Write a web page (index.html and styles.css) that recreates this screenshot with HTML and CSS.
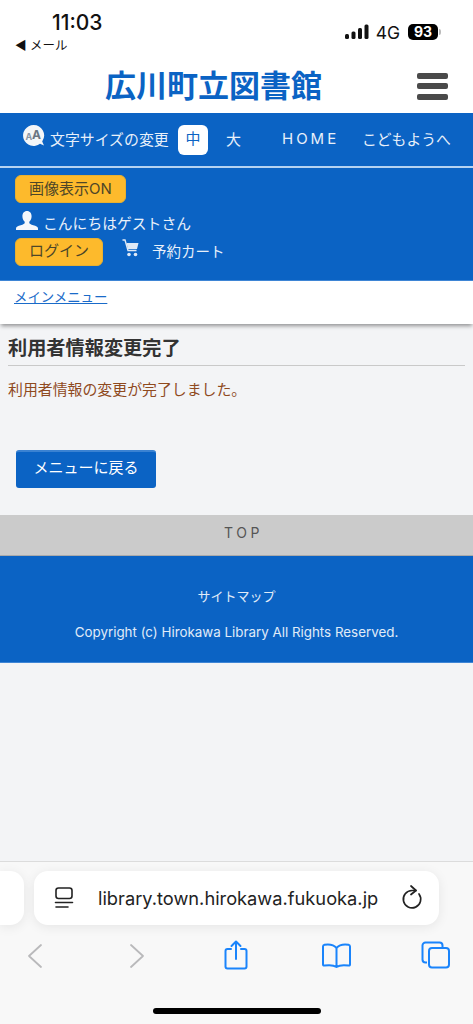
FILE: index.html
```html
<!DOCTYPE html>
<html lang="ja">
<head>
    <meta charset="UTF-8">
    <meta name="viewport" content="width=device-width, initial-scale=1.0">
    <title>広川町立図書館</title>
    <link rel="stylesheet" href="styles.css">
</head>
<body>
    <div class="status">
        <div class="status-left">
            <div class="time">11:03</div>
            <div class="back">◀ メール</div>
        </div>
        <div class="status-right">
            <svg class="signal" width="24" height="16" viewBox="0 0 24 16">
                <rect x="0" y="10" width="4" height="5" rx="1.5"/>
                <rect x="6.5" y="7.5" width="4" height="7.5" rx="1.5"/>
                <rect x="13" y="4" width="4" height="11" rx="1.5"/>
                <rect x="19.5" y="0.5" width="4" height="14.5" rx="1.5"/>
            </svg>
            <span class="net">4G</span>
            <span class="battery">93</span>
            <span class="battery-tip"></span>
        </div>
    </div>

    <header class="site-head">
        <h1 class="site-title">広川町立図書館</h1>
        <div class="burger"><span></span><span></span><span></span></div>
    </header>

    <nav class="nav">
        <svg class="aa-icon" width="23" height="24" viewBox="0 0 23 24">
            <path d="M11.5 1a10.5 10.5 0 1 0 6.5 18.8l4 1.7-1.800-4A10.500 10.500 0 0 0 11.500 1z" fill="#f4f6f8"/>
            <text x="3.500" y="15.500" class="aa-small">A</text>
            <text x="10" y="14.500" class="aa-big">A</text>
        </svg>
        <span class="size-label">文字サイズの変更</span>
        <span class="size-on">中</span>
        <span class="size-off">大</span>
        <a class="nav-home" href="#">HOME</a>
        <a class="nav-kids" href="#">こどもようへ</a>
    </nav>

    <section class="user-panel">
        <div class="user-row"><a class="pill pill-image" href="#">画像表示ON</a></div>
        <div class="user-row greet">
            <svg width="22" height="19" viewBox="0 0 22 19" fill="#f4f7fb">
                <path d="M11 0c3 0 4.600 2.300 4.600 5.200 0 2.400-1 4.500-2.300 5.500v1.300c0 .8 1.500 1.400 4 2.200 2.600.8 4.700 1.500 4.700 3.200v1.600H0v-1.600c0-1.700 2.100-2.400 4.700-3.200 2.500-.8 4-1.400 4-2.200v-1.300C7.400 9.700 6.400 7.600 6.400 5.200 6.400 2.300 8 0 11 0z"/>
            </svg>
            <span>こんにちはゲストさん</span>
        </div>
        <div class="user-row login-row">
            <a class="pill pill-login" href="#">ログイン</a>
            <svg class="cart" width="17" height="18" viewBox="0 0 17 18">
                <path d="M0.500 1h2.500l3 10.500h8.500" fill="none" stroke="#dfe9f6" stroke-width="1.400"/>
                <path d="M4.500 4h12l-1.500 6H6z" fill="#dfe9f6"/>
                <circle cx="7" cy="15.500" r="1.800" fill="#dfe9f6"/>
                <circle cx="13.500" cy="15.500" r="1.800" fill="#dfe9f6"/>
            </svg>
            <span class="cart-label">予約カート</span>
        </div>
    </section>

    <div class="menu-strip"><a href="#">メインメニュー</a></div>

    <main class="content">
        <h2 class="page-title">利用者情報変更完了</h2>
        <p class="done-text">利用者情報の変更が完了しました。</p>
        <a class="back-btn" href="#">メニューに戻る</a>
    </main>

    <a class="to-top" href="#">TOP</a>

    <footer class="foot">
        <a href="#">サイトマップ</a>
        <p>Copyright (c) Hirokawa Library All Rights Reserved.</p>
    </footer>

    <div class="spacer"></div>

    <div class="browser">
        <div class="tabs-row">
            <div class="tab-peek"></div>
            <div class="url-bar">
                <svg width="20" height="24" viewBox="0 0 20 24" fill="none" stroke="#222" stroke-width="1.600" stroke-linecap="round">
                    <rect x="2" y="2" width="16" height="10.500" rx="2.500"/>
                    <path d="M1.500 16.500h17M2 21h12"/>
                </svg>
                <span class="url">library.town.hirokawa.fukuoka.jp</span>
                <svg width="22" height="26" viewBox="0 0 22 26" fill="none" stroke="#222" stroke-width="1.700" stroke-linecap="round" stroke-linejoin="round">
                    <path d="M15 5.500H11A8.700 8.700 0 1 0 18 9"/>
                    <path d="M10 1l5 4.500-5 4"/>
                </svg>
            </div>
        </div>
        <div class="tools">
            <svg width="30" height="30" viewBox="0 0 30 30" fill="none" stroke="#b9b9bb" stroke-width="1.800" stroke-linecap="round" stroke-linejoin="round">
                <path d="M21 5L9 16l12 11"/>
            </svg>
            <svg width="30" height="30" viewBox="0 0 30 30" fill="none" stroke="#b9b9bb" stroke-width="1.800" stroke-linecap="round" stroke-linejoin="round">
                <path d="M11 5l12 11-12 11"/>
            </svg>
            <svg width="30" height="30" viewBox="0 0 30 30" fill="none" stroke="#1a84fb" stroke-width="2" stroke-linecap="round" stroke-linejoin="round">
                <path d="M10 9H6.500a2 2 0 0 0-2 2v15.500a2 2 0 0 0 2 2h17a2 2 0 0 0 2-2V11a2 2 0 0 0-2-2H20"/>
                <path d="M15 19V1.500M10.500 6L15 1.500 19.500 6"/>
            </svg>
            <svg width="30" height="30" viewBox="0 0 30 30" fill="none" stroke="#1a84fb" stroke-width="2" stroke-linecap="round" stroke-linejoin="round">
                <path d="M15.500 8C13 5 9 4 3.500 4.800 2.500 5 2 5.600 2 6.400v18c0 .9.600 1.300 1.500 1.200 5-.7 9-.6 12 1.400 3-2 7-2.100 12-1.400.9.100 1.500-.3 1.500-1.200v-18c0-.8-.5-1.400-1.500-1.600C22 4 18 5 15.500 8zV27"/>
            </svg>
            <svg width="30" height="30" viewBox="0 0 30 30" fill="none" stroke="#1a84fb" stroke-width="2" stroke-linejoin="round">
                <path d="M6 22.500H4.500a3 3 0 0 1-3-3V5.500a3 3 0 0 1 3-3h14a3 3 0 0 1 3 3V7"/>
                <rect x="8" y="8" width="20" height="19.500" rx="3"/>
            </svg>
        </div>
        <div class="home-bar"></div>
    </div>
</body>
</html>
```

FILE: styles.css
```css
* {
    box-sizing: border-box;
}

html,
body {
    margin: 0;
    height: 1024px;
}

body {
    display: flex;
    flex-direction: column;
    overflow: hidden;
    background-color: #f3f4f6;
    color: #333;
    font-family: "Inter", "Noto Sans CJK JP", sans-serif;
    font-size: 15px;
}

a {
    color: inherit;
    text-decoration: none;
}

/* status bar */
.status {
    height: 64px;
    display: flex;
    justify-content: space-between;
    background-color: #fff;
    color: #111;
}

.status-left {
    padding: 9px 0 0 15px;
}

.time {
    height: 27px;
    padding-left: 37px;
    font-size: 21px;
    font-weight: 500;
    line-height: 27px;
}

.back {
    margin-top: 1px;
    font-size: 12.500px;
    line-height: 17px;
}

.status-right {
    display: flex;
    align-items: center;
    height: 24px;
    margin-top: 20px;
    padding-right: 32px;
}

.signal {
    fill: #111;
    margin-right: 7px;
}

.net {
    margin-right: 8px;
    font-size: 17.500px;
}

.battery {
    width: 30px;
    height: 16px;
    border-radius: 5px;
    background-color: #000;
    color: #fff;
    font-size: 14px;
    font-weight: 700;
    line-height: 16px;
    text-align: center;
}

.battery-tip {
    width: 2px;
    height: 6px;
    margin-left: 1px;
    border-radius: 0 2px 2px 0;
    background-color: #bbb;
}

/* site header */
.site-head {
    height: 49px;
    display: flex;
    align-items: center;
    justify-content: space-between;
    padding: 0 25px 0 105px;
    background-color: #fff;
}

.site-title {
    margin: 0 0 6px;
    color: #0b63c4;
    font-size: 31px;
    font-weight: 700;
    line-height: 44px;
}

.burger {
    display: flex;
    flex-direction: column;
    gap: 4.500px;
    width: 31px;
    margin-bottom: 5px;
}

.burger span {
    height: 6px;
    border-radius: 2px;
    background-color: #4a4a4a;
}

/* blue nav */
.nav {
    height: 55px;
    display: flex;
    align-items: center;
    padding: 0 0 0 22px;
    background-color: #0b63c4;
    border-bottom: 2px solid #b5d3f2;
    color: #e8f0fa;
    white-space: nowrap;
}

.nav a,
.size-label,
.size-off {
    margin-top: -3px;
}

.aa-icon {
    flex: none;
    margin-top: -7px;
}

.aa-small {
    fill: #8a95a3;
    font-size: 9px;
    font-weight: 700;
}

.aa-big {
    fill: #6a7582;
    font-size: 12px;
    font-weight: 700;
}

.size-label {
    margin-left: 5px;
    width: 128px;
    font-size: 14.900px;
}

.size-on {
    width: 30px;
    height: 30px;
    border-radius: 6px;
    background-color: #fff;
    color: #0b63c4;
    line-height: 28px;
    text-align: center;
}

.size-off {
    margin-left: 18px;
    width: 56px;
}

.nav-home {
    width: 80px;
    font-size: 15px;
    letter-spacing: 3px;
}

.nav-kids {
    font-size: 14.800px;
}

/* user panel */
.user-panel {
    height: 113px;
    padding: 7px 15px 0;
    background-color: #0b63c4;
    border-bottom: 1px solid #3f86d6;
    color: #e8f0fa;
}

.user-row {
    display: flex;
    align-items: center;
}

.pill {
    height: 28px;
    border: 1px solid #e8b030;
    border-radius: 6px;
    background-color: #fdba2c;
    color: #4d4628;
    line-height: 25px;
    text-align: center;
}

.pill-image {
    width: 111px;
}

.pill-login {
    width: 88px;
    line-height: 24px;
}

.greet {
    height: 35px;
    gap: 5px;
    padding-top: 3px;
}

.greet svg {
    flex: none;
    margin-top: -3px;
    margin-left: 1px;
}

.greet span {
    font-size: 14.800px;
}

.cart {
    margin: -9px 0 0 19px;
}

.cart-label {
    margin: -3px 0 0 13px;
    font-size: 14.500px;
}

/* main menu link */
.menu-strip {
    height: 43px;
    padding: 6px 14px 0;
    background-color: #fff;
    box-shadow: 0 3px 4px -1px rgba(0, 0, 0, 0.4);
    position: relative;
    font-size: 13.400px;
    line-height: 20px;
}

.menu-strip a {
    color: #1a6bc9;
    text-decoration: underline;
}

/* content */
.content {
    height: 191px;
    padding: 11px 8px 0;
}

.page-title {
    margin: 0;
    height: 31px;
    border-bottom: 1px solid #c9c9c9;
    color: #333;
    font-size: 19.200px;
    font-weight: 700;
    line-height: 26px;
}

.done-text {
    margin: 13px 0 0;
    color: #8f4a1e;
    font-size: 14.900px;
    line-height: 22px;
}

.back-btn {
    display: block;
    width: 140px;
    height: 38px;
    margin: 49px 0 0 8px;
    border-radius: 3px;
    border-top: 2px solid #3a82d2;
    background-color: #0b63c4;
    color: #fff;
    line-height: 32px;
    text-align: center;
}

/* top link + footer */
.to-top {
    height: 41px;
    padding-left: 14px;
    background-color: #cbcbcb;
    border-bottom: 1px solid #aaa;
    color: #555;
    font-size: 14px;
    letter-spacing: 3.500px;
    line-height: 35px;
    text-align: center;
}

.foot {
    height: 107px;
    padding-top: 30px;
    background-color: #0b63c4;
    border-bottom: 1px solid #3f86d6;
    color: #e0ebf8;
    font-size: 13.370px;
    line-height: 20px;
    text-align: center;
}

.foot a {
    display: block;
    font-size: 13px;
}

.foot p {
    margin: 16px 0 0;
}

.spacer {
    flex: 1;
}

/* safari chrome */
.browser {
    height: 163px;
    padding-top: 9px;
    border-top: 1px solid #dcdcdc;
    background-color: #f8f8f8;
}

.tabs-row {
    display: flex;
    gap: 10px;
    padding-right: 34px;
}

.tab-peek {
    width: 24px;
    height: 54px;
    border-radius: 0 14px 14px 0;
    background-color: #fff;
    box-shadow: 0 2px 12px rgba(0, 0, 0, 0.08);
}

.url-bar {
    flex: 1;
    height: 54px;
    display: flex;
    align-items: center;
    padding: 0 16px 0 20px;
    border-radius: 14px;
    background-color: #fff;
    box-shadow: 0 2px 12px rgba(0, 0, 0, 0.08);
}

.url {
    flex: 1;
    margin-left: 24px;
    color: #222;
    font-size: 18.250px;
    white-space: nowrap;
}

.tools {
    display: flex;
    justify-content: space-between;
    margin-top: 15px;
    padding: 0 22px 0 20px;
}

.home-bar {
    width: 168px;
    height: 6px;
    margin: 38px auto 0;
    border-radius: 3px;
    background-color: #000;
}
```
